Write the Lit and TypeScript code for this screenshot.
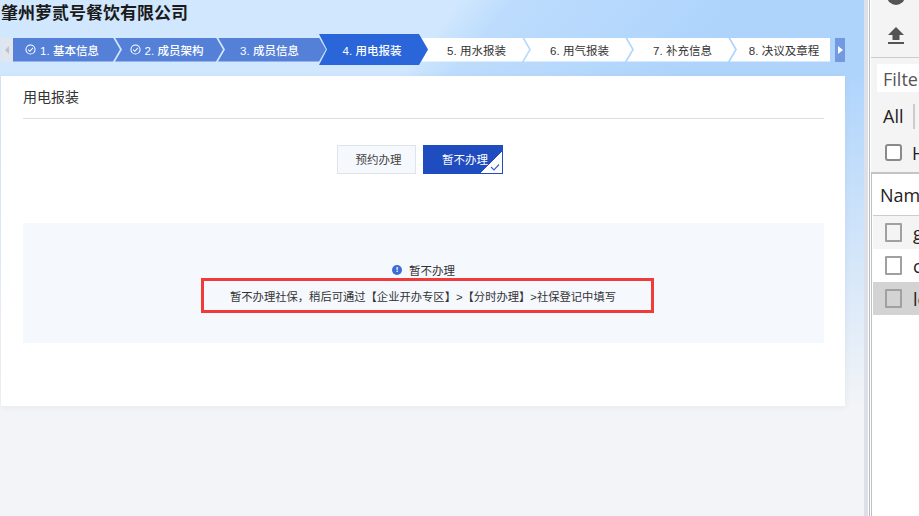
import { LitElement, html, css } from "lit";
import { customElement } from "lit/decorators.js";

const steps = [
  { t: "1. 基本信息", s: "done" },
  { t: "2. 成员架构", s: "done" },
  { t: "3. 成员信息", s: "past" },
  { t: "4. 用电报装", s: "active" },
  { t: "5. 用水报装", s: "todo" },
  { t: "6. 用气报装", s: "todo" },
  { t: "7. 补充信息", s: "todo" },
  { t: "8. 决议及章程", s: "todo" },
];

const checkIcon = html`<svg class="ck" viewBox="0 0 12 12" width="11" height="11"><circle cx="6" cy="6" r="5" fill="none" stroke="currentColor" stroke-width="1.1"/><path d="M3.4 6.2 5.3 8 8.7 4.3" fill="none" stroke="currentColor" stroke-width="1.1"/></svg>`;

@customElement("app-root")
export class AppRoot extends LitElement {
  static styles = css`
    :host { display: block; width: 919px; height: 516px; overflow: hidden; font-family: "Liberation Sans", "Noto Sans CJK SC", sans-serif; }
    * { box-sizing: border-box; }
    .page { display: flex; width: 919px; height: 516px; }
    .left {
      width: 864px; flex: none; display: flex; flex-direction: column;
      background:
        linear-gradient(180deg, rgba(241,243,246,0) 0, rgba(241,243,246,0) 70px, #f2f4f7 405px),
        linear-gradient(129deg, #d0e7fe 0, #d0e7fe 36%, #bddcfd 40%, #aed4fc 58%, #aed4fc 100%);
    }
    .title { height: 34px; padding: 2px 0 0 1px; font-size: 17px; line-height: 24px; font-weight: 700; color: #1a1a1a; }
    .bar { display: flex; align-items: center; height: 31px; width: 864px; }
    .nav { width: 12px; height: 24px; margin-left: 1px; flex: none; background: #e1e5ee; display: flex; align-items: center; justify-content: center; }
    .nav i { display: block; width: 0; height: 0; border: 4px solid transparent; border-left-width: 0; border-right: 4px solid #bcc2cc; }
    .steps { display: flex; width: 820px; height: 31px; align-items: center; flex: none; }
    .step {
      width: 108px; height: 24px; margin-left: -5px; flex: none; background: #fff; color: #333;
      display: flex; align-items: center; justify-content: center; gap: 4px; font-size: 11.5px; padding-right: 5px;
      clip-path: polygon(0 0, calc(100% - 7px) 0, 100% 50%, calc(100% - 7px) 100%, 0 100%, 7px 50%);
    }
    .step.todo { padding: 0 0 0 3px; }
    .step:first-child { margin-left: 0; width: 107px; padding-right: 9px; clip-path: polygon(0 0, calc(100% - 7px) 0, 100% 50%, calc(100% - 7px) 100%, 0 100%); }
    .step:last-child { width: 100px; clip-path: polygon(0 0, 100% 0, 100% 100%, 0 100%, 7px 50%); padding: 0 0 0 8px; }
    .step.done, .step.past { background: #5480d8; color: #fff; font-weight: 500; }
    .step.active {
      background: #2a66da; color: #fff; font-weight: 500; height: 31px; width: 109px; margin-left: -7px; margin-right: -2px; padding-right: 3px; z-index: 1;
      clip-path: polygon(0 0, calc(100% - 9px) 0, 100% 50%, calc(100% - 9px) 100%, 0 100%, 8px 50%);
    }
    .ck { flex: none; }
    .nav.next { width: 10px; margin-left: 2px; background: #7499e3; }
    .nav.next i { border-left: 5px solid #fff; border-right-width: 0; }
    .card {
      margin: 11px 0 0 1px; width: 844px; height: 330px; background: #fff; padding: 0 21px 0 22px;
      box-shadow: 0 1px 6px rgba(120,130,150,.1);
    }
    .head { height: 43px; padding-top: 9px; line-height: 24px; font-size: 14px; color: #333; border-bottom: 1px solid #dcdee2; }
    .opts { display: flex; justify-content: center; gap: 7px; margin-top: 26px; padding-right: 8px; }
    .opt { width: 79px; height: 29px; padding: 0 0 2px 5px; display: flex; align-items: center; justify-content: center; font-size: 11.5px; color: #444; background: #f5f8fd; border: 1px solid #dfe3ea; position: relative; }
    .opt.on { width: 80px; background: #1f4dbf; border-color: #1f4dbf; color: #fff; }
    .corner { position: absolute; right: 0; bottom: 0; width: 21px; height: 21px; background: linear-gradient(135deg, transparent 50%, #fff 50%); }
    .corner svg { position: absolute; right: 2px; bottom: 2px; }
    .info { margin-top: 49px; height: 120px; background: #f5f8fd; padding-top: 38px; display: flex; flex-direction: column; align-items: center; }
    .info-t { display: flex; align-items: center; gap: 7px; height: 17px; font-size: 11.5px; color: #333; }
    .dot { width: 10px; height: 10px; border-radius: 50%; background: #3d6cd8; color: #fff; font-size: 8px; line-height: 10px; text-align: center; font-weight: 700; }
    .red { width: 453px; height: 35px; margin-left: 8px; padding-right: 9px; border: 3px solid #f13a3a; display: flex; align-items: center; justify-content: center; font-size: 11.3px; color: #333; }
    .gap { width: 4px; flex: none; background: #dde0e8; }
    .right { flex: 1; min-width: 0; background: #fff; padding-left: 1px; overflow: hidden; font-family: "Open Sans", sans-serif; color: #222; font-size: 18px; white-space: nowrap; }
    .frame { height: 100%; border-left: 1px solid #bbb; padding-left: 1px; }
    .inner { height: 100%; background: #f4f4f4; overflow: hidden; }
    .circle { width: 18px; height: 18px; border-radius: 50%; background: #555; margin: -13px 0 0 16px; display: block; }
    .up { height: 53px; padding: 22px 0 0 17px; border-bottom: 1px solid #ccc; }
    .up svg { display: block; }
    .filter { margin: 6px 0 0 6px; height: 28px; background: #fff; padding-left: 6px; line-height: 30px; color: #555; }
    .all { height: 34px; display: flex; align-items: center; padding-left: 12px; margin-top: 7px; gap: 10px; }
    .all i { width: 2px; height: 25px; background: #ccc; }
    .chk { width: 17px; height: 17px; border: 2px solid #8a8a8a; border-radius: 3px; background: #fff; flex: none; display: block; }
    .hide { display: flex; align-items: center; gap: 10px; padding-left: 14px; height: 39px; }
    .table { border-top: 2px solid #c4c4c4; border-left: 1px solid #c0c0c0; background: #fff; height: 400px; padding-left: 1px; }
    .th { height: 42px; padding-left: 7px; line-height: 42px; border-bottom: 1px solid #ccc; }
    .tr { height: 33px; display: flex; align-items: center; gap: 11px; padding-left: 12px; }
    .tr.a { background: #f4f4f4; }
    .tr.b { background: #fff; }
    .tr.c { background: #d3d3d3; }
    .tr u { text-decoration: underline; }
    .tr .chk { width: 17px; height: 19px; border-radius: 1px; border-color: #a0a0a0; background: transparent; }
  `;

  render() {
    return html`<div class="page">
      <div class="left">
        <div class="title">肇州萝贰号餐饮有限公司</div>
        <div class="bar">
          <div class="nav"><i></i></div>
          <div class="steps">
            ${steps.map((s) => html`<div class="step ${s.s}">${s.s === "done" ? checkIcon : ""}<span>${s.t}</span></div>`)}
          </div>
          <div class="nav next"><i></i></div>
        </div>
        <div class="card">
          <div class="head">用电报装</div>
          <div class="opts">
            <div class="opt">预约办理</div>
            <div class="opt on">暂不办理<span class="corner"><svg width="10" height="8" viewBox="0 0 10 8"><path d="M1 4 4 7 9 1.5" fill="none" stroke="#3a63c4" stroke-width="1.2"/></svg></span></div>
          </div>
          <div class="info">
            <div class="info-t"><span class="dot">!</span><span>暂不办理</span></div>
            <div class="red">暂不办理社保，稍后可通过【企业开办专区】&gt;【分时办理】&gt;社保登记中填写</div>
          </div>
        </div>
      </div>
      <div class="gap"></div>
      <div class="right"><div class="frame"><div class="inner">
        <span class="circle"></span>
        <div class="up"><svg width="16" height="18" viewBox="0 0 16 18"><path d="M8 0 16 8H11.5V13H4.5V8H0Z" fill="#555"/><rect y="15" width="16" height="2" fill="#555"/></svg></div>
        <div class="filter">Filter</div>
        <div class="all"><span>All</span><i></i></div>
        <div class="hide"><span class="chk"></span><span>Hide</span></div>
        <div class="table">
          <div class="th">Name</div>
          <div class="tr a"><span class="chk"></span><u>g</u></div>
          <div class="tr b"><span class="chk"></span><span>c</span></div>
          <div class="tr c"><span class="chk"></span><span>lo</span></div>
        </div>
      </div></div></div>
    </div>`;
  }
}
